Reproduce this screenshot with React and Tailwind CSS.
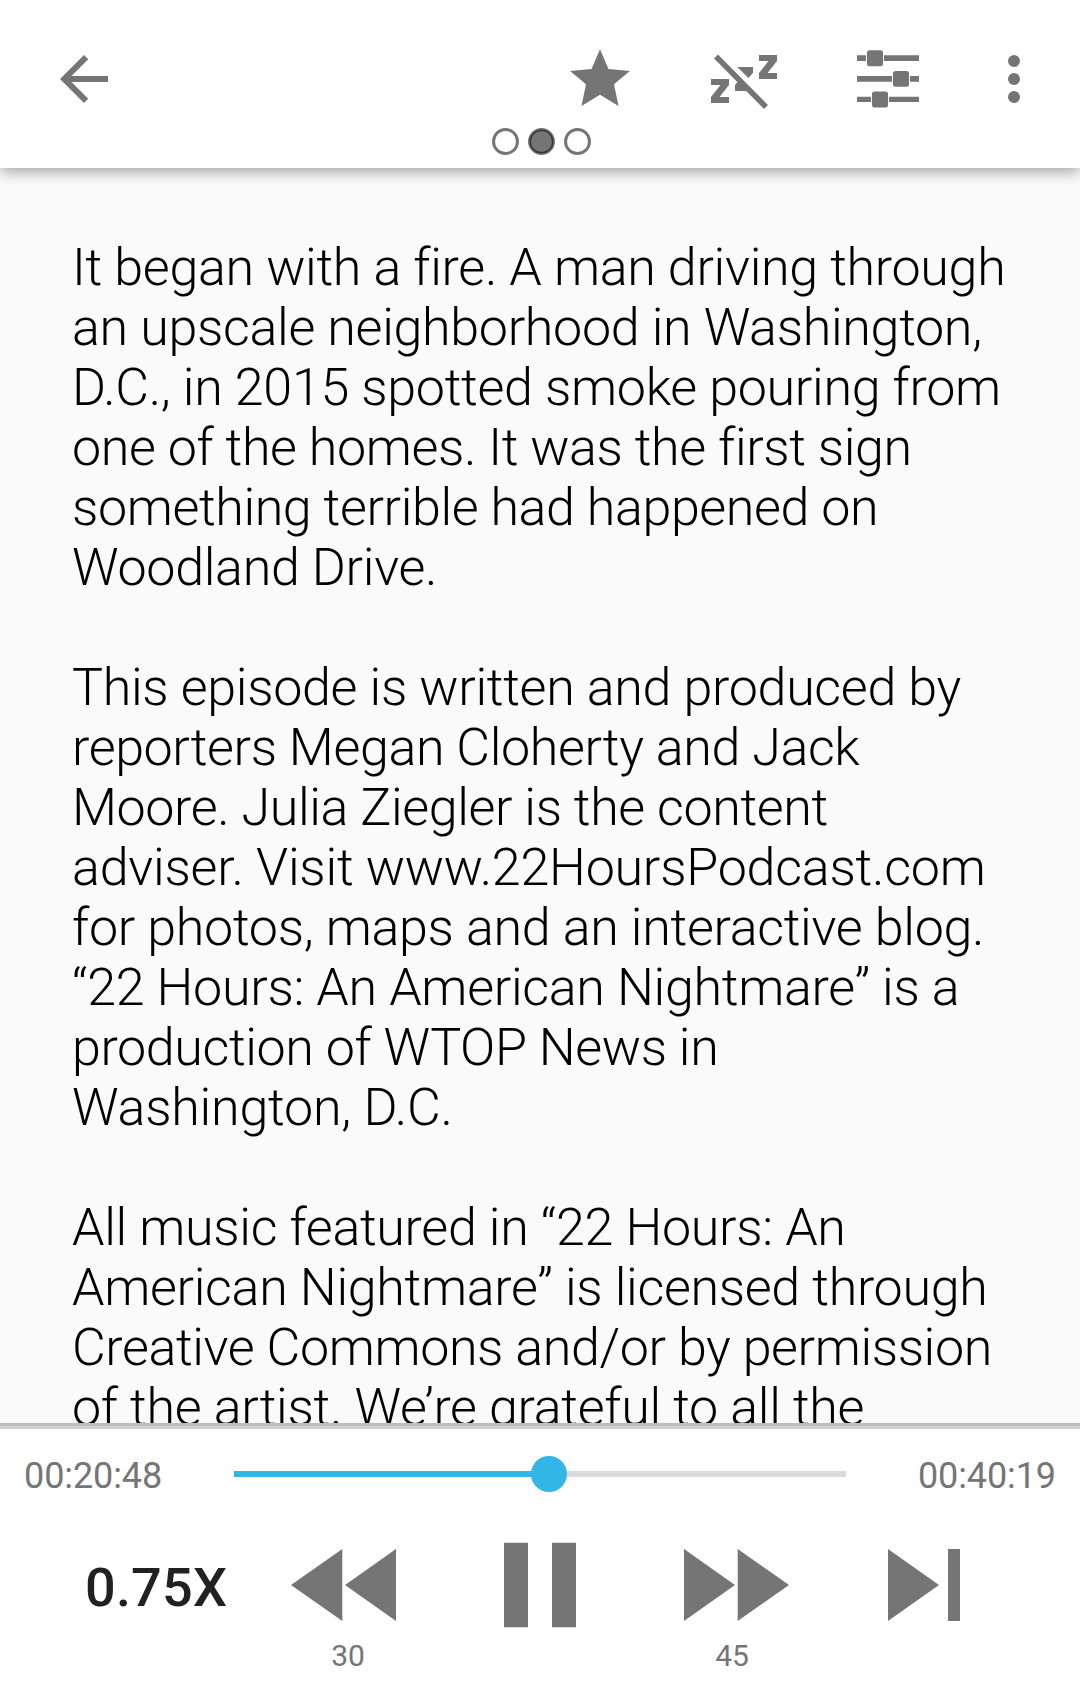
const C = '#757575';

function ToolbarIcons() {
  return (
    <>
      <svg viewBox="0 0 24 24" className="ml-12 size-[72px]" fill={C}>
        <path d="M20 11H7.83l5.59-5.59L12 4l-8 8 8 8 1.41-1.41L7.83 13H20v-2z" />
      </svg>
      <svg viewBox="564 43 72 72" className="ml-auto size-[72px]" fill={C}>
        <path d="M600 49.3L608.5 69L629.9 71L614 84.3L618.5 106L600 94.7L581.5 106L586 84.3L570.1 71L591.5 69Z" />
      </svg>
      <svg viewBox="708 43 72 72" className="ml-[72px] size-[72px]" fill={C}>
        <path d="M759 55H777V61L767.500 73H777V79H759V73L768.500 61H759Z" />
        <path d="M711 79H729V85L719.500 97H729V103H711V97L720.500 85H711Z" />
        <path d="M737.300 67H753V72.700L748.500 78Z" />
        <path d="M735 91V84.700L738.500 81L749 91Z" />
        <path d="M716 56.500L766 107" stroke={C} strokeWidth="5.500" />
      </svg>
      <svg viewBox="852 43 72 72" className="ml-[72px] size-[72px]" fill={C}>
        <path d="M857 55.200H866V61H857ZM884 55.200H919V61H884ZM857 76H892V81.800H857ZM910 76H919V81.800H910ZM857 96.700H871V102H857ZM889 96.700H919V102H889Z" />
        <rect x="867" y="50.200" width="16" height="16" rx="2.500" />
        <rect x="893" y="71" width="16" height="15.800" rx="2.500" />
        <rect x="872" y="91.400" width="16" height="16" rx="2.500" />
      </svg>
      <svg viewBox="0 0 24 24" className="mr-[30px] ml-[54px] size-[72px]" fill={C}>
        <circle cx="12" cy="6" r="2" />
        <circle cx="12" cy="12" r="2" />
        <circle cx="12" cy="18" r="2" />
      </svg>
    </>
  );
}

function Pager() {
  return (
    <svg className="mt-[13px] ml-[490px] h-[27px] w-[104px]" viewBox="0 0 104 27" stroke="#000" strokeOpacity=".54" strokeWidth="3" fill="none">
      <circle cx="15.500" cy="13.500" r="12" />
      <circle cx="51.500" cy="13.500" r="12" fill="#757575" />
      <circle cx="87.500" cy="13.500" r="12" />
    </svg>
  );
}

const NORMAL = 'tracking-[-0.32px]';
const TIGHT = 'tracking-[-0.4px]';
const WIDE = 'tracking-[-0.24px]';

const paragraphs = [
  [
    ['It began with a fire. A man driving through', NORMAL],
    ['an upscale neighborhood in Washington,', NORMAL],
    ['D.C., in 2015 spotted smoke pouring from', NORMAL],
    ['one of the homes. It was the first sign', TIGHT],
    ['something terrible had happened on', TIGHT],
    ['Woodland Drive.', NORMAL],
  ],
  [
    ['This episode is written and produced by', NORMAL],
    ['reporters Megan Cloherty and Jack', TIGHT],
    ['Moore. Julia Ziegler is the content', TIGHT],
    ['adviser. Visit www.22HoursPodcast.com', WIDE],
    ['for photos, maps and an interactive blog.', NORMAL],
    ['“22 Hours: An American Nightmare” is a', NORMAL],
    ['production of WTOP News in', TIGHT],
    ['Washington, D.C.', WIDE],
  ],
  [
    ['All music featured in “22 Hours: An', NORMAL],
    ['American Nightmare” is licensed through', NORMAL],
    ['Creative Commons and/or by permission', TIGHT],
    ['of the artist. We’re grateful to all the', NORMAL],
  ],
];

export default function App() {
  return (
    <div className="flex h-[1699px] w-[1080px] flex-col overflow-hidden bg-[#fafafa] font-['Roboto',sans-serif]">
      <header className="relative z-10 h-[168px] shrink-0 bg-white shadow-[0_6px_12px_-1px_rgba(0,0,0,0.31)]">
        <div className="flex h-[115px] items-end">
          <ToolbarIcons />
        </div>
        <Pager />
      </header>

      <main className="h-[1255px] shrink-0 overflow-hidden pt-[70px] pl-[72px] text-[52px] leading-[60px] font-light whitespace-nowrap text-black">
        {paragraphs.map((lines, i) => (
          <p key={i} className="mb-[60px]">
            {lines.map(([line, tracking]) => (
              <span key={line} className={`block ${tracking}`}>{line}</span>
            ))}
          </p>
        ))}
      </main>

      <footer className="flex grow flex-col bg-white">
        <div className="h-[3px] bg-[#bdbdbd]" />
        <div className="h-[3px] bg-[#d1d1d1]" />
        <div className="flex h-[90px] items-center px-6 text-[36px] tracking-[-0.1px] text-[#757575]">
          <span className="mt-[3px] w-[210px]">00:20:48</span>
          <div className="flex h-9 w-[612px] items-center">
            <div className="h-[6px] w-[298px] bg-[#33b5e5]" />
            <div className="-ml-px size-9 shrink-0 rounded-full bg-[#33b5e5]" />
            <div className="h-[6px] grow bg-[#dadada]" />
          </div>
          <span className="mt-[3px] ml-auto">00:40:19</span>
        </div>
        <div className="mt-[3px] flex h-[126px] items-center">
          <span className="mt-1 ml-[85px] w-[206px] text-[54px] font-medium tracking-[0.2px] text-[#212121]">0.75X</span>
          <svg viewBox="0 0 106 84" className="h-[84px] w-[106px]" fill={C}>
            <path d="M0 42L51.300 6V78ZM54 42L105 6V78Z" />
          </svg>
          <svg viewBox="0 0 73 86" className="ml-[107px] h-[86px] w-[73px]" fill={C}>
            <path d="M0 .7H24V85.300H0ZM48 .7H72V85.300H48Z" />
          </svg>
          <svg viewBox="0 0 106 84" className="ml-[107px] h-[84px] w-[106px]" fill={C}>
            <path d="M0 6L51 42L0 78ZM53.700 6L105 42L53.700 78Z" />
          </svg>
          <svg viewBox="0 0 73 84" className="ml-[98px] h-[84px] w-[73px]" fill={C}>
            <path d="M0 6L51 42L0 78ZM60 6H72V78H60Z" />
          </svg>
        </div>
        <div className="-mt-[9px] flex text-[30px] leading-[34px] text-[#757575]">
          <span className="ml-[298px] w-[100px] text-center">30</span>
          <span className="ml-[284px] w-[100px] text-center">45</span>
        </div>
      </footer>
    </div>
  );
}
